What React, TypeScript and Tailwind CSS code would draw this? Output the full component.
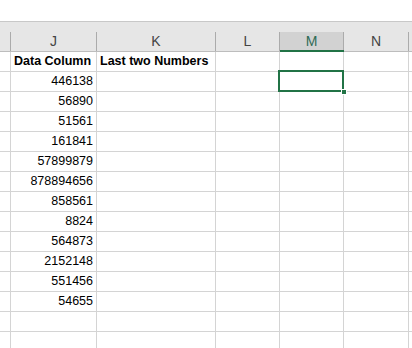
const rows: (string | null)[] = [
  '446138',
  '56890',
  '51561',
  '161841',
  '57899879',
  '878894656',
  '858561',
  '8824',
  '564873',
  '2152148',
  '551456',
  '54655',
  null,
  null,
];

const font = { fontFamily: '"Liberation Sans", Arial, sans-serif' };

function Row({ value, bold, first }: { value: string | null; bold?: boolean; first?: string }) {
  return (
    <div className="flex h-[20px] border-b border-[#d4d4d4]">
      <div className="w-[11px] shrink-0 border-r border-[#d4d4d4]" />
      <div
        className={`w-[86px] shrink-0 border-r border-[#d4d4d4] flex items-center text-[12.5px] text-black ${
          bold ? 'justify-start pl-[3px] font-bold' : 'justify-end pr-[3px]'
        }`}
      >
        {value}
      </div>
      <div className="w-[119px] shrink-0 border-r border-[#d4d4d4] flex items-center pl-[3px] text-[12.5px] font-bold text-black">
        {first}
      </div>
      <div className="w-[64px] shrink-0 border-r border-[#d4d4d4]" />
      <div className="w-[64px] shrink-0 border-r border-[#d4d4d4]" />
      <div className="w-[65px] shrink-0 border-r border-[#d4d4d4]" />
      <div className="flex-1" />
    </div>
  );
}

export default function App() {
  return (
    <div className="relative w-[412px] h-[348px] overflow-hidden bg-white" style={font}>
      <div className="h-[22px] bg-white border-b border-[#c8c8c8]" />
      <div className="h-[10px] bg-[#e6e6e6]" />
      <div className="flex h-[20px] bg-[#e6e6e6] border-b border-[#bdbdbd] text-[14px] text-[#444]">
        <div className="w-[11px] shrink-0 border-r border-[#ababab]" />
        <div className="w-[86px] shrink-0 border-r border-[#ababab] flex items-center justify-center">J</div>
        <div className="w-[119px] shrink-0 border-r border-[#ababab] flex items-center justify-center">K</div>
        <div className="w-[64px] shrink-0 border-r border-[#ababab] flex items-center justify-center">L</div>
        <div className="w-[64px] shrink-0 border-r border-[#ababab] bg-[#d2d2d2] flex items-center justify-center text-[#2f6b55] relative">
          M
          <div className="absolute left-0 right-[-1px] bottom-[-1px] h-[2px] bg-[#217346]" />
        </div>
        <div className="w-[65px] shrink-0 border-r border-[#ababab] flex items-center justify-center">N</div>
        <div className="flex-1" />
      </div>
      <Row value="Data Column" bold first="Last two Numbers" />
      {rows.map((v, i) => (
        <Row key={i} value={v} />
      ))}
      <div className="absolute left-[278px] top-[70px] w-[66px] h-[22px] border-2 border-[#217346]">
        <div className="absolute right-[-5px] bottom-[-5px] w-[6px] h-[6px] bg-[#217346] border border-white" />
      </div>
    </div>
  );
}
